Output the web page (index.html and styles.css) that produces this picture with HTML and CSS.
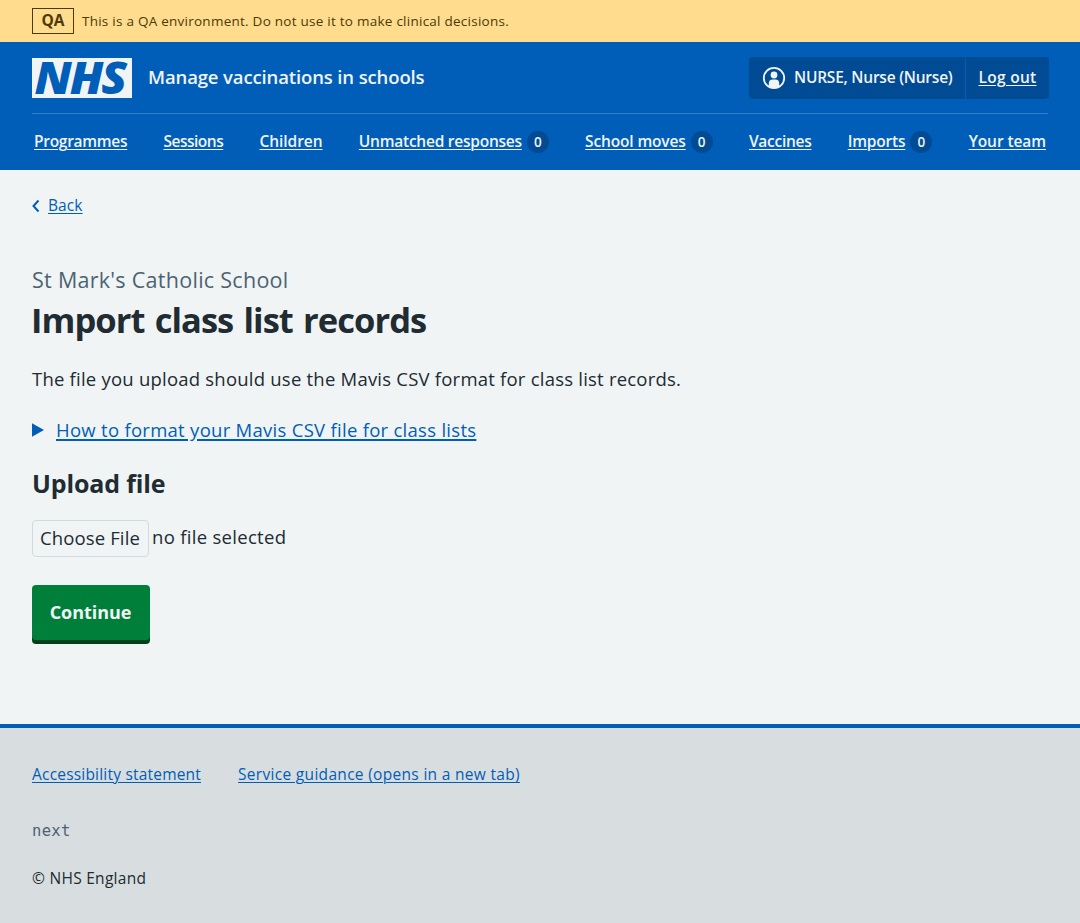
FILE: index.html
```html
<!DOCTYPE html>
<html lang="en">
<head>
<meta charset="utf-8">
<title>Import class list records – Manage vaccinations in schools</title>
<link rel="stylesheet" href="styles.css">
</head>
<body>
<div class="environment">
  <strong class="environment-tag">QA</strong>
  <span class="environment-text">This is a QA environment. Do not use it to make clinical decisions.</span>
</div>
<header class="header">
  <div class="header-top">
    <a class="brand" href="#">
      <svg class="logo" viewBox="0 0 100 40" width="100" height="40" role="img" aria-label="NHS">
        <rect width="100" height="40" fill="#f0f4f5"/>
        <text class="logo-text" x="2.5" y="36" textLength="90.500" lengthAdjust="spacingAndGlyphs">NHS</text>
      </svg>
      <span class="service">Manage vaccinations in schools</span>
    </a>
    <div class="account">
      <div class="account-user">
        <svg class="user-icon" viewBox="0 0 24 24" width="24" height="24" aria-hidden="true">
          <circle cx="12" cy="12" r="10.2" fill="none" stroke="#f0f4f5" stroke-width="1.8"/>
          <circle cx="12" cy="9" r="3.4" fill="#f0f4f5"/>
          <path d="M6.800 20.500V17.500Q6.800 13.500 10.500 13.500H13.500Q17.200 13.500 17.200 17.500V20.500Q12 24 6.800 20.500Z" fill="#f0f4f5"/>
        </svg>
        <span class="user-name">NURSE, Nurse (Nurse)</span>
      </div>
      <div class="account-exit"><a class="logout" href="#">Log out</a></div>
    </div>
  </div>
  <nav class="nav">
    <div class="nav-item"><a class="nav-link nav-programmes" href="#">Programmes</a></div>
    <div class="nav-item"><a class="nav-link nav-sessions" href="#">Sessions</a></div>
    <div class="nav-item"><a class="nav-link nav-children" href="#">Children</a></div>
    <div class="nav-item"><a class="nav-link nav-responses" href="#">Unmatched responses</a><span class="badge">0</span></div>
    <div class="nav-item"><a class="nav-link nav-moves" href="#">School moves</a><span class="badge">0</span></div>
    <div class="nav-item"><a class="nav-link nav-vaccines" href="#">Vaccines</a></div>
    <div class="nav-item"><a class="nav-link nav-imports" href="#">Imports</a><span class="badge">0</span></div>
    <div class="nav-item"><a class="nav-link nav-team" href="#">Your team</a></div>
  </nav>
</header>
<main class="main">
  <div class="back">
    <svg class="chevron" viewBox="0 0 8 14" width="8" height="14" aria-hidden="true"><path d="M6.500 1.500L1.500 7L6.500 12.500" fill="none" stroke="#005eb8" stroke-width="2"/></svg>
    <a class="back-link" href="#">Back</a>
  </div>
  <h1 class="title"><span class="caption">St Mark's Catholic School</span><span class="heading">Import class list records</span></h1>
  <p class="intro">The file you upload should use the Mavis CSV format for class list records.</p>
  <div class="details">
    <svg class="arrow" viewBox="0 0 12 14" width="12" height="14" aria-hidden="true"><path d="M0 0.300L12 7L0 13.700Z" fill="#005eb8"/></svg>
    <a class="summary" href="#">How to format your Mavis CSV file for class lists</a>
  </div>
  <h2 class="subheading">Upload file</h2>
  <div class="upload">
    <button class="choose" type="button">Choose File</button>
    <span class="file-status">no file selected</span>
  </div>
  <button class="continue" type="button">Continue</button>
</main>
<footer class="footer">
  <div class="footer-links">
    <a class="footer-link" href="#">Accessibility statement</a>
    <a class="footer-link footer-guidance" href="#">Service guidance (opens in a new tab)</a>
  </div>
  <div class="version">next</div>
  <div class="copyright">© NHS England</div>
</footer>
</body>
</html>
```
FILE: styles.css
```css
* { box-sizing: border-box; }
body { margin: 0; background: #f0f4f5; color: #212b32; font-family: "Open Sans", "Noto Sans", sans-serif; }
a { color: #005eb8; text-underline-offset: 2px; text-decoration-thickness: 1px; text-decoration-skip-ink: auto; }
.environment { height: 42px; padding: 0 32px; display: flex; align-items: center; gap: 8px; background: #ffdc8e; color: #4d3a05; white-space: nowrap; }
.environment-tag { width: 42px; height: 26px; padding-bottom: 2px; border: 1px solid #4d3a05; display: flex; align-items: center; justify-content: center; font-size: 15.5px; font-weight: 700; }
.environment-text { font-size: 13.5px; line-height: 20px; letter-spacing: 0.25px; }
.header { height: 128px; padding: 0 32px; background: #005eb8; }
.header-top { height: 72px; padding-top: 1px; border-bottom: 1px solid #337ec6; display: flex; align-items: center; justify-content: space-between; }
.brand { display: flex; align-items: center; gap: 16px; color: #f0f4f5; text-decoration: none; }
.logo { overflow: visible; }
.logo-text { font-family: "Open Sans", sans-serif; font-size: 45px; font-weight: 800; font-style: italic; letter-spacing: -2px; fill: #005eb8; }
.service { padding-bottom: 2px; font-size: 18.5px; font-weight: 600; line-height: 28px; letter-spacing: -0.13px; }
.account { width: 300px; height: 42px; margin-right: -1px; display: flex; border-radius: 4px; background: #004b93; color: #f0f4f5; font-size: 15.5px; font-weight: 600; white-space: nowrap; }
.account-user { width: 217px; padding-left: 13px; display: flex; align-items: center; gap: 8px; border-right: 1px solid #005eb8; }
.user-name { padding-bottom: 2px; letter-spacing: -0.23px; }
.account-exit { flex: 1; padding-bottom: 2px; display: flex; align-items: center; justify-content: center; }
.logout { color: #f0f4f5; letter-spacing: 0.3px; }
.nav { height: 56px; padding: 0 2px; display: flex; align-items: center; justify-content: space-between; white-space: nowrap; }
.nav-item { display: flex; align-items: center; gap: 5px; }
.nav-link { padding-bottom: 2px; color: #f0f4f5; font-size: 15.5px; font-weight: 600; line-height: 24px; }
.nav-programmes { letter-spacing: -0.28px; }
.nav-sessions { letter-spacing: -0.5px; }
.nav-children { letter-spacing: -0.05px; }
.nav-responses { letter-spacing: -0.24px; }
.nav-moves { letter-spacing: -0.15px; }
.nav-vaccines { letter-spacing: -0.27px; }
.nav-imports { letter-spacing: -0.2px; }
.nav-team { letter-spacing: -0.08px; }
.badge { width: 22px; height: 22px; border-radius: 11px; background: #004b93; color: #f0f4f5; font-size: 13.5px; font-weight: 600; line-height: 22px; text-align: center; }
.main { height: 554px; padding: 24px 32px 0; }
.back { height: 24px; display: flex; align-items: center; gap: 8px; }
.back-link { padding-bottom: 2px; font-size: 15.5px; line-height: 24px; letter-spacing: 0.1px; }
.title { margin: 46px 0 0; }
.caption { display: block; font-size: 21.5px; font-weight: 400; line-height: 32px; letter-spacing: 0.28px; color: #4c6272; }
.heading { display: block; margin: 1px 0 0 -1px; font-size: 34.5px; font-weight: 700; line-height: 46px; letter-spacing: -0.95px; word-spacing: 2.2px; }
.intro { margin: 22px 0 0; font-size: 18.5px; line-height: 28px; letter-spacing: 0.22px; }
.details { height: 28px; margin-top: 23px; display: flex; align-items: center; gap: 12px; }
.summary { font-size: 18.5px; line-height: 28px; letter-spacing: 0.28px; text-decoration-thickness: 2px; }
.subheading { margin: 21px 0 0; font-size: 25px; font-weight: 700; line-height: 36px; letter-spacing: -0.15px; }
.upload { height: 37px; margin-top: 19px; display: flex; align-items: center; gap: 4px; font-size: 18.5px; }
.choose { width: 117px; height: 37px; padding: 0 1px 2px 0; border: 1px solid #d2dae1; border-radius: 4px; background: transparent; color: #212b32; font-family: inherit; font-size: 18.5px; letter-spacing: 0.12px; white-space: nowrap; }
.file-status { padding-bottom: 4px; margin-left: -1px; letter-spacing: 0.3px; }
.continue { display: block; width: 118px; height: 55px; margin-top: 28px; padding: 0 1px 1px 0; border: 0; border-radius: 4px; background: #007f3b; box-shadow: 0 4px 0 #00401e; color: #f0f4f5; font-family: inherit; font-size: 18px; font-weight: 700; letter-spacing: -0.05px; }
.footer { height: 199px; padding: 34px 32px 0; border-top: 4px solid #005eb8; background: #d8dde0; font-size: 15.5px; line-height: 24px; }
.footer-links { display: flex; gap: 37px; letter-spacing: 0.2px; }
.footer-guidance { letter-spacing: 0.31px; }
.version { margin-top: 33px; color: #4c6272; font-family: "DejaVu Sans Mono", monospace; letter-spacing: 0.3px; }
.copyright { margin-top: 23px; letter-spacing: 0.28px; }
```
